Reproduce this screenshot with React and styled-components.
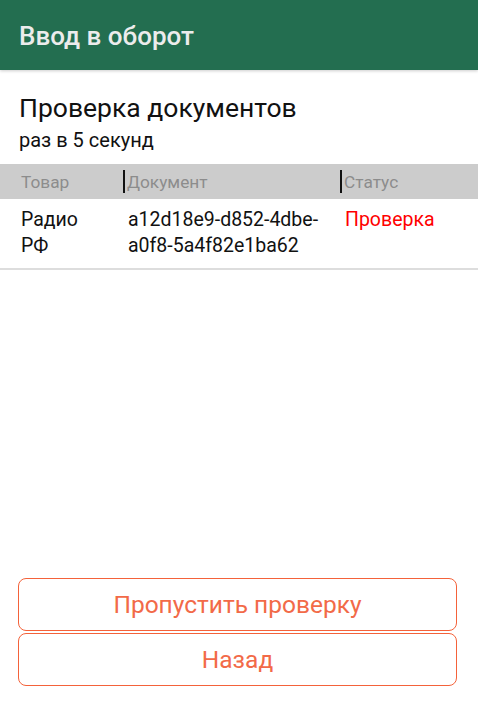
import React from "react";
import styled, { createGlobalStyle } from "styled-components";

const Global = createGlobalStyle`
  html, body { margin: 0; padding: 0; background: #fff; }
  body { font-family: Roboto, "Noto Sans", sans-serif; }
  * { box-sizing: border-box; }
`;

const Screen = styled.div`
  width: 478px;
  height: 708px;
  display: flex;
  flex-direction: column;
  background: #fff;
`;

const AppBar = styled.header`
  height: 70px;
  flex: 0 0 70px;
  background: #236e50;
  display: flex;
  align-items: center;
  padding-left: 19px;
  padding-top: 2px;
  box-shadow: 0 1px 3px rgba(0, 0, 0, 0.2);
  position: relative;
  z-index: 1;
`;

const AppTitle = styled.h1`
  margin: 0;
  font-size: 26px;
  font-weight: 500;
  color: #ececec;
`;

const Intro = styled.section`
  padding: 22px 19px 12px;
  display: flex;
  flex-direction: column;
  gap: 6px;
`;

const Heading = styled.div`
  font-size: 26.5px;
  line-height: 31px;
  color: #111;
`;

const Sub = styled.div`
  font-size: 20px;
  line-height: 23px;
  color: #111;
`;

const Grid = styled.div`
  display: grid;
  grid-template-columns: 123px 217px 1fr;
`;

const HeadRow = styled(Grid)`
  height: 35px;
  background: #cccccc;
`;

const HeadCell = styled.div`
  display: flex;
  align-items: center;
  gap: 2px;
  padding-left: ${(p) => (p.$first ? "21px" : "0")};
  font-size: 17.3px;
  color: #8c8c8c;
`;

const Bar = styled.span`
  width: 2px;
  height: 23px;
  background: #111;
  margin-top: -1px;
`;

const BodyRow = styled(Grid)`
  padding: 8px 0 9px;
  border-bottom: 2px solid #dddddd;
`;

const Cell = styled.div`
  font-size: 19.5px;
  line-height: 26px;
  color: ${(p) => (p.$status ? "#ff0000" : "#111")};
  padding-left: ${(p) => p.$pad}px;
  padding-right: ${(p) => p.$right || 8}px;
`;

const Spacer = styled.div`
  flex: 1;
`;

const Actions = styled.div`
  display: flex;
  flex-direction: column;
  gap: 2px;
  padding: 0 21px 22px 18px;
`;

const OutlineButton = styled.button`
  height: 53px;
  border: 1.5px solid #f4623a;
  border-radius: 8px;
  background: #fff;
  color: #f26a48;
  font-family: Roboto, "Noto Sans", sans-serif;
  font-size: 24.5px;
  cursor: pointer;
`;

export default function App() {
  return (
    <Screen>
      <Global />
      <AppBar>
        <AppTitle>Ввод в оборот</AppTitle>
      </AppBar>
      <Intro>
        <Heading>Проверка документов</Heading>
        <Sub>раз в 5 секунд</Sub>
      </Intro>
      <HeadRow>
        <HeadCell $first>Товар</HeadCell>
        <HeadCell>
          <Bar />
          Документ
        </HeadCell>
        <HeadCell>
          <Bar />
          Статус
        </HeadCell>
      </HeadRow>
      <BodyRow>
        <Cell $pad={21} $right={20}>
          Радио РФ
        </Cell>
        <Cell $pad={5}>a12d18e9-d852-4dbe-a0f8-5a4f82e1ba62</Cell>
        <Cell $pad={5} $status>
          Проверка
        </Cell>
      </BodyRow>
      <Spacer />
      <Actions>
        <OutlineButton>Пропустить проверку</OutlineButton>
        <OutlineButton>Назад</OutlineButton>
      </Actions>
    </Screen>
  );
}
